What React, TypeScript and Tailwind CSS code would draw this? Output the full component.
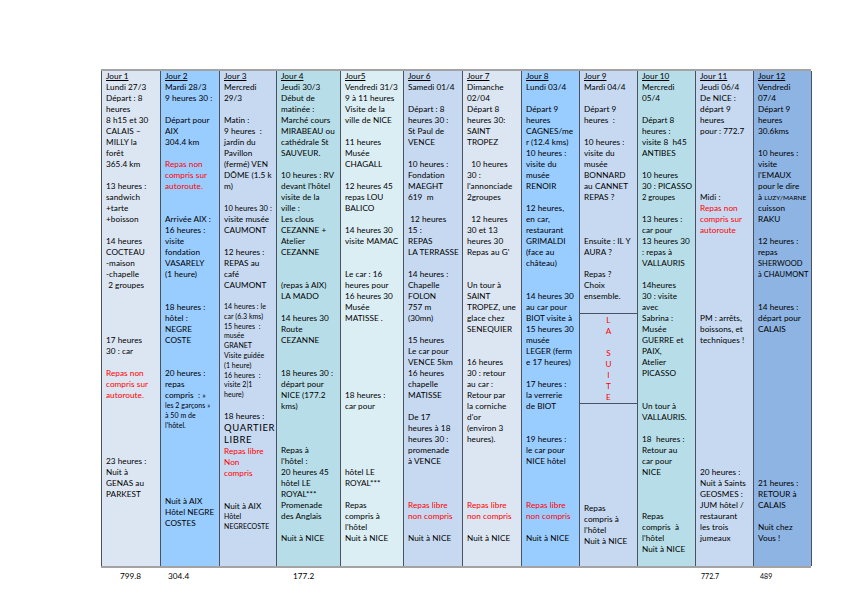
import React from 'react';

// line markers: "" blank, "!" red, "~" small, "^" large, "#" reduced size
type Col = { w: string; bg: string; title: string; lines: string[] };

const cols: Col[] = [
  {
    w: 'w-[59px]', bg: 'bg-[#dce6f2]', title: 'Jour 1',
    lines: ['Lundi 27/3', 'Départ : 8', 'heures', '8 h15 et 30', 'CALAIS –', 'MILLY la', 'forêt', '365.4 km', '', '13 heures :', 'sandwich', '+tarte', '+boisson', '', '14 heures', 'COCTEAU', '-maison', '-chapelle', ' 2 groupes', '', '', '', '', '17 heures', '30 : car', '', '!Repas non', '!compris sur', '!autoroute.', '', '', '', '', '', '23 heures :', 'Nuit à', 'GENAS au', 'PARKEST'],
  },
  {
    w: 'w-[59px]', bg: 'bg-[#99ccff]', title: 'Jour 2',
    lines: ['Mardi 28/3', '9 heures 30 :', '', 'Départ pour', 'AIX', '304.4 km', '', '!Repas non', '!compris sur', '!autoroute.', '', '', 'Arrivée AIX :', '16 heures :', 'visite', 'fondation', 'VASARELY', '(1 heure)', '', '', '18 heures :', 'hôtel :', 'NEGRE', 'COSTE', '', '', '20 heures :', 'repas', 'compris  : »', '~les 2 garçons »', '~à 50 m de', "~l'hôtel.", '', '', '', '', '', '', 'Nuit à AIX', 'Hôtel NEGRE', 'COSTES'],
  },
  {
    w: 'w-[57px]', bg: 'bg-[#c6d9f1]', title: 'Jour 3',
    lines: ['Mercredi', '29/3', '', 'Matin :', '9 heures  :', 'jardin du', 'Pavillon', '(fermé) VEN', 'DÔME (1.5 k', 'm)', '', '#10 heures 30 :', 'visite musée', 'CAUMONT', '', '12 heures :', 'REPAS au', 'café', 'CAUMONT', '', '~14 heures : le', '~car (6.3 kms)', '~15 heures  :', '~musée', '~GRANET', '~Visite guidée', '~(1 heure)', '~16 heures  :', '~visite 2|1', '~heure)', '', '18 heures :', '^QUARTIER', '^LIBRE', '!Repas libre', '!Non', '!compris', '', '', 'Nuit à AIX', '~Hôtel', '~NEGRECOSTE'],
  },
  {
    w: 'w-[64px]', bg: 'bg-[#b7dee8]', title: 'Jour 4',
    lines: ['Jeudi 30/3', 'Début de', 'matinée :', 'Marché cours', 'MIRABEAU ou', 'cathédrale St', 'SAUVEUR.', '', '10 heures : RV', "devant l'hôtel", 'visite de la', 'ville :', 'Les clous', 'CEZANNE +', 'Atelier', 'CEZANNE', '', '', '(repas à AIX)', 'LA MADO', '', '14 heures 30', 'Route', 'CEZANNE', '', '', '18 heures 30 :', 'départ pour', 'NICE (177.2', 'kms)', '', '', '', 'Repas à', "l'hôtel :", '20 heures 45', 'hôtel LE', 'ROYAL***', 'Promenade', 'des Anglais', '', 'Nuit à NICE'],
  },
  {
    w: 'w-[63px]', bg: 'bg-[#dbeef4]', title: 'Jour5',
    lines: ['Vendredi 31/3', '9 à 11 heures', 'Visite de la', 'ville de NICE', '', '11 heures', 'Musée', 'CHAGALL', '', '12 heures 45', 'repas LOU', 'BALICO', '', '14 heures 30', 'visite MAMAC', '', '', 'Le car : 16', 'heures pour', '16 heures 30', 'Musée', 'MATISSE .', '', '', '', '', '', '', '18 heures :', 'car pour', '', '', '', '', '', 'hôtel LE', 'ROYAL***', '', 'Repas', 'compris à', "l'hôtel", 'Nuit à NICE'],
  },
  {
    w: 'w-[59px]', bg: 'bg-[#c6d9f1]', title: 'Jour 6',
    lines: ['Samedi 01/4', '', 'Départ : 8', 'heures 30 :', 'St Paul de', 'VENCE', '', '10 heures :', 'Fondation', 'MAEGHT', '619  m', '', ' 12 heures', '15 :', 'REPAS', 'LA TERRASSE', '', '14 heures :', 'Chapelle', 'FOLON', '757 m', '(30mn)', '', '15 heures', 'Le car pour', 'VENCE 5km', '16 heures', 'chapelle', 'MATISSE', '', 'De 17', 'heures à 18', 'heures 30 :', 'promenade', 'à VENCE', '', '', '', '!Repas libre', '!non compris', '', 'Nuit à NICE'],
  },
  {
    w: 'w-[59px]', bg: 'bg-[#dce6f2]', title: 'Jour 7',
    lines: ['Dimanche', '02/04', 'Départ 8', 'heures 30:', 'SAINT', 'TROPEZ', '', '  10 heures', '30 :', "l'annonciade", '2groupes', '', '  12 heures', '30 et 13', 'heures 30', "Repas au G'", '', '', 'Un tour à', 'SAINT', 'TROPEZ, une', 'glace chez', 'SENEQUIER', '', '', '16 heures', '30 : retour', 'au car :', 'Retour par', 'la corniche', "d'or", '(environ 3', 'heures).', '', '', '', '', '', '!Repas libre', '!non compris', '', 'Nuit à NICE'],
  },
  {
    w: 'w-[58px]', bg: 'bg-[#99ccff]', title: 'Jour 8',
    lines: ['Lundi 03/4', '', 'Départ 9', 'heures', 'CAGNES/me', 'r (12.4 kms)', '10 heures :', 'visite du', 'musée', 'RENOIR', '', '12 heures,', 'en car,', 'restaurant', 'GRIMALDI', '(face au', 'château)', '', '', '14 heures 30', 'au car pour', 'BIOT visite à', '15 heures 30', 'musée', 'LEGER (ferm', 'e 17 heures)', '', '17 heures :', 'la verrerie', 'de BIOT', '', '', '19 heures :', 'le car pour', 'NICE hôtel', '', '', '', '!Repas libre', '!non compris', '', 'Nuit à NICE'],
  },
];

const jour9 = ['Mardi 04/4', '', 'Départ 9', 'heures  :', '', '10 heures :', 'visite du', 'musée', 'BONNARD', 'au CANNET', 'REPAS ?', '', '', '', 'Ensuite : IL Y', 'AURA ?', '', 'Repas ?', 'Choix', 'ensemble.'];

const rest: Col[] = [
  {
    w: 'w-[58px]', bg: 'bg-[#b7dee8]', title: 'Jour 10',
    lines: ['Mercredi', '05/4', '', 'Départ 8', 'heures :', 'visite 8  h45', 'ANTIBES', '', '10 heures', '30 : PICASSO', '#2 groupes', '', '13 heures :', 'car pour', '13 heures 30', ': repas à', 'VALLAURIS', '', '14heures', '30 : visite', 'avec', 'Sabrina :', 'Musée', 'GUERRE et', 'PAIX,', 'Atelier', 'PICASSO', '', '', 'Un tour à', 'VALLAURIS.', '', '18  heures :', 'Retour au', 'car pour', 'NICE', '', '', '', 'Repas', 'compris  à', "l'hôtel", 'Nuit à NICE'],
  },
  {
    w: 'w-[58px]', bg: 'bg-[#c6d9f1]', title: 'Jour 11',
    lines: ['Jeudi 06/4', 'De NICE :', 'départ 9', 'heures', 'pour : 772.7', '', '', '', '', '', 'Midi :', '!Repas non', '!compris sur', '!autoroute', '', '', '', '', '', '', '', 'PM : arrêts,', 'boissons, et', 'techniques !', '', '', '', '', '', '', '', '', '', '', '', '20 heures :', 'Nuit à Saints', 'GEOSMES :', 'JUM hôtel /', 'restaurant', 'les trois', 'jumeaux'],
  },
  {
    w: 'w-[58px]', bg: 'bg-[#8db4e2]', title: 'Jour 12',
    lines: ['Vendredi', '07/4', 'Départ 9', 'heures', '30.6kms', '', '10 heures :', 'visite', "l'EMAUX", 'pour le dire', 'LUZY', 'cuisson', 'RAKU', '', '12 heures :', 'repas', '#SHERWOOD', '#à CHAUMONT', '', '', '14 heures :', 'départ pour', 'CALAIS', '', '', '', '', '', '', '', '', '', '', '', '', '', '21 heures :', 'RETOUR à', 'CALAIS', '', 'Nuit chez', 'Vous !'],
  },
];

function Line({ s }: { s: string }) {
  if (s === '') return <div className="h-[11px]" />;
  if (s === 'LUZY')
    return (
      <div className="h-[11px] leading-[11px] whitespace-pre">
        à <span className="text-[6.5px]">LUZY/MARNE</span>
      </div>
    );
  const m = s[0];
  const t = s.slice(1);
  if (m === '!') return <div className="h-[11px] leading-[11px] whitespace-pre text-[#ff0000]">{t}</div>;
  if (m === '~') return <div className="h-[9.8px] leading-[9.8px] whitespace-pre text-[7px]">{t}</div>;
  if (m === '^') return <div className="h-[12px] leading-[12px] whitespace-pre text-[9.5px] tracking-[0.6px]">{t}</div>;
  if (m === '#') return <div className="h-[11px] leading-[11px] whitespace-pre text-[7.5px]">{t}</div>;
  return <div className="h-[11px] leading-[11px] whitespace-pre">{s}</div>;
}

function Title({ t }: { t: string }) {
  return <div className="h-[11px] leading-[11px] underline underline-offset-1">{t}</div>;
}

function Column({ c }: { c: Col }) {
  return (
    <div className={`${c.w} ${c.bg} shrink-0 border-l border-[#4a5261] pl-[4px] overflow-hidden`}>
      <Title t={c.title} />
      {c.lines.map((s, i) => (
        <Line key={i} s={s} />
      ))}
    </div>
  );
}

export default function App() {
  return (
    <div className="w-[842px] h-[595px] bg-white pt-[69px] pl-[101px] font-['Lato',sans-serif] text-[8.2px] tracking-[0.05px] text-black">
      <div className="flex h-[499px] w-[710px] border-y-2 border-[#a3a3a3]">
        {cols.map((c) => (
          <Column key={c.title} c={c} />
        ))}

        <div className="w-[58px] shrink-0 border-l border-[#4a5261] bg-[#c6d9f1] flex flex-col">
          <div className="h-[242px] pl-[4px]">
            <Title t="Jour 9" />
            {jour9.map((s, i) => (
              <Line key={i} s={s} />
            ))}
          </div>
          <div className="h-[90px] border-t border-[#4a5261] pt-[1px] flex flex-col items-center text-[#ff0000]">
            {['L', 'A', '', 'S', 'U', 'I', 'T', 'E'].map((l, i) => (
              <div key={i} className="h-[11px] leading-[11px]">{l}</div>
            ))}
          </div>
          <div className="flex-1 border-t border-[#4a5261] pl-[4px] pt-[99px]">
            <Line s="Repas" />
            <Line s="compris à" />
            <Line s="l'hôtel" />
            <Line s="Nuit à NICE" />
          </div>
        </div>

        {rest.map((c, i) => (
          <div key={c.title} className={i === rest.length - 1 ? 'flex border-r border-[#4a5261]' : 'flex'}>
            <Column c={c} />
          </div>
        ))}
      </div>

      <div className="flex w-[710px] pt-[3px] leading-[11px]">
        <div className="w-[59px] text-center">799.8</div>
        <div className="w-[59px] pl-[8px]">304.4</div>
        <div className="w-[57px]" />
        <div className="w-[64px] pl-[17px]">177.2</div>
        <div className="w-[63px]" />
        <div className="w-[59px]" />
        <div className="w-[59px]" />
        <div className="w-[58px]" />
        <div className="w-[58px]" />
        <div className="w-[58px]" />
        <div className="w-[58px] pl-[6px] text-[7px]">772.7</div>
        <div className="w-[58px] pl-[7px] text-[7px]">489</div>
      </div>
    </div>
  );
}
